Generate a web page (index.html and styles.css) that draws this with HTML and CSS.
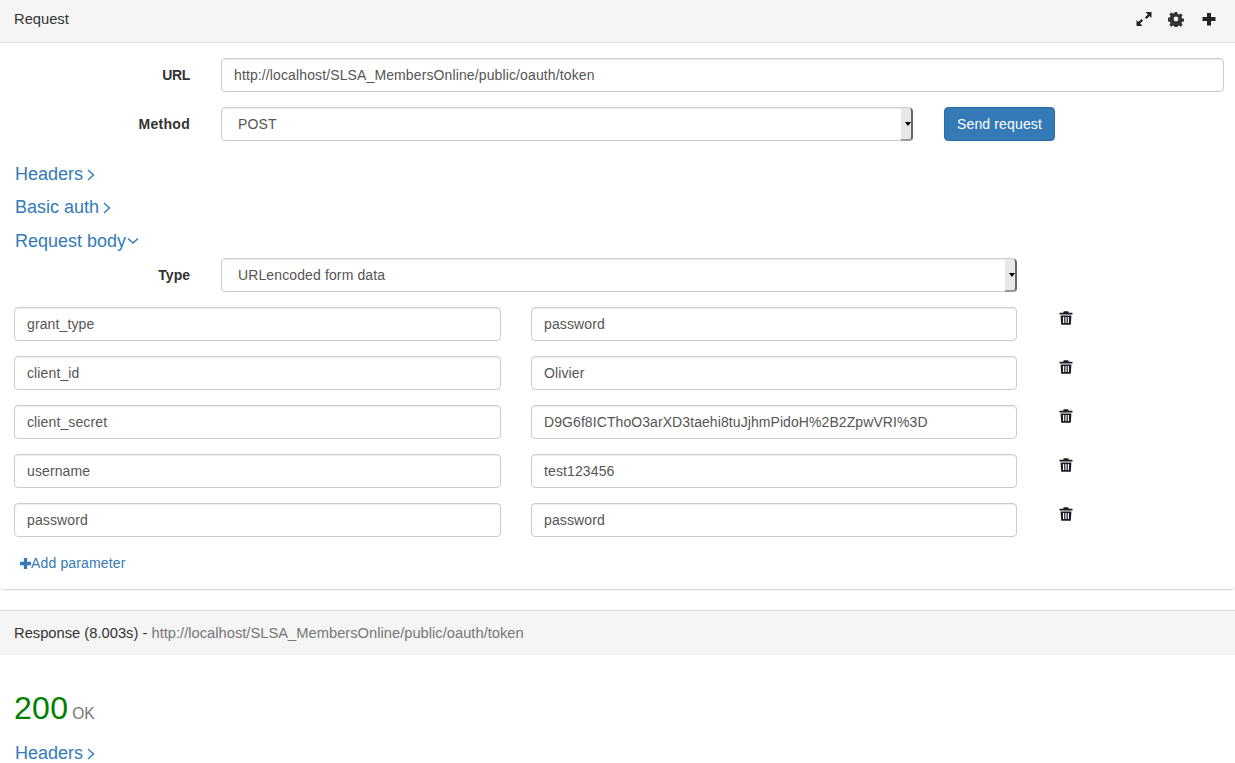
FILE: index.html
```html
<!DOCTYPE html>
<html lang="en">
<head>
<meta charset="utf-8">
<title>Request</title>
<link rel="stylesheet" href="styles.css">
</head>
<body>
<section class="panel">
  <header class="heading request-heading">
    <span>Request</span>
    <div class="tools">
      <svg class="tool expand" viewBox="0 0 16 16" width="16" height="16"><path d="M9.500 1H15.500v6l-1.900-1.900-3 3-1.700-1.700 3-3zM6.500 15H.5V9l1.900 1.900 3-3 1.700 1.700-3 3z" fill="#222"/></svg>
      <svg class="tool" viewBox="0 0 16 16" width="16" height="16"><path fill="#333" fill-rule="evenodd" d="M6.700 1h2.600l.4 2 1.300.6 1.800-1.100 1.800 1.800-1.100 1.800.6 1.300 2 .4v2.600l-2 .4-.6 1.300 1.100 1.800-1.800 1.800-1.800-1.100-1.300.6-.4 2H6.700l-.4-2-1.300-.6-1.800 1.100-1.800-1.800 1.100-1.800-.6-1.300-2-.4V6.700l2-.4.6-1.300-1.100-1.800 1.800-1.800 1.800 1.100 1.300-.6zM8 5.600a2.400 2.400 0 1 0 0 4.800 2.400 2.400 0 0 0 0-4.800z"/></svg>
      <svg class="tool" viewBox="0 0 16 16" width="16" height="16"><path d="M6 2h4v4h4.500v4H10v4.500H6V10H1.500V6H6z" fill="#222"/></svg>
    </div>
  </header>
  <div class="body">
    <div class="form-row url-row">
      <label class="field-label">URL</label>
      <input class="control url" type="text" value="http://localhost/SLSA_MembersOnline/public/oauth/token">
    </div>
    <div class="form-row method-row">
      <label class="field-label">Method</label>
      <div class="select-wrap method"><select class="control"><option>POST</option></select></div>
      <button class="send">Send request</button>
    </div>
    <a class="section-link headers-link">Headers<svg class="chev" viewBox="0 0 10 12" width="10" height="12"><path d="M2 1 7.500 6 2 11" fill="none" stroke="#337ab7" stroke-width="1.400"/></svg></a>
    <a class="section-link auth-link">Basic auth<svg class="chev" viewBox="0 0 10 12" width="10" height="12"><path d="M2 1 7.500 6 2 11" fill="none" stroke="#337ab7" stroke-width="1.400"/></svg></a>
    <a class="section-link body-link">Request body<svg class="chev-down" viewBox="0 0 12 10" width="12" height="10"><path d="M1 2.500 6 7l5-4.500" fill="none" stroke="#337ab7" stroke-width="1.400"/></svg></a>
    <div class="form-row type-row">
      <label class="field-label">Type</label>
      <div class="select-wrap type"><select class="control"><option>URLencoded form data</option></select></div>
    </div>
    <div class="params">
      <div class="param"><input class="control" type="text" value="grant_type"><input class="control" type="text" value="password"><svg class="trash" viewBox="0 0 14 14" width="14" height="14"><use href="#trash"/></svg></div>
      <div class="param"><input class="control" type="text" value="client_id"><input class="control" type="text" value="Olivier"><svg class="trash" viewBox="0 0 14 14" width="14" height="14"><use href="#trash"/></svg></div>
      <div class="param"><input class="control" type="text" value="client_secret"><input class="control long-value" type="text" value="D9G6f8ICThoO3arXD3taehi8tuJjhmPidoH%2B2ZpwVRI%3D"><svg class="trash" viewBox="0 0 14 14" width="14" height="14"><use href="#trash"/></svg></div>
      <div class="param"><input class="control" type="text" value="username"><input class="control" type="text" value="test123456"><svg class="trash" viewBox="0 0 14 14" width="14" height="14"><use href="#trash"/></svg></div>
      <div class="param"><input class="control" type="text" value="password"><input class="control" type="text" value="password"><svg class="trash" viewBox="0 0 14 14" width="14" height="14"><use href="#trash"/></svg></div>
    </div>
    <a class="add-param"><svg viewBox="0 0 12 12" width="11" height="11"><path d="M4.200 0h3.600v4.200H12v3.600H7.800V12H4.200V7.800H0V4.200h4.200z" fill="#337ab7"/></svg>Add parameter</a>
  </div>
</section>
<section class="response">
  <header class="heading response-heading">Response (8.003s) - <span class="muted">http://localhost/SLSA_MembersOnline/public/oauth/token</span></header>
  <div class="status"><span class="code">200</span> <span class="status-text">OK</span></div>
  <a class="section-link">Headers<svg class="chev" viewBox="0 0 10 12" width="10" height="12"><path d="M2 1 7.500 6 2 11" fill="none" stroke="#337ab7" stroke-width="1.400"/></svg></a>
</section>
<svg class="defs" width="0" height="0"><defs><symbol id="trash" viewBox="0 0 14 14"><path fill="#1c1c24" fill-rule="evenodd" d="M4.800.3h4.400l.6 1.500H13.500v1.700H.5V1.800h3.700zM1.600 4.500h10.800l-.6 9.200H2.200zM4 6v6h1.200V6zm2.400 0v6h1.200V6zm2.400 0v6H10V6z"/></symbol></defs></svg>
</body>
</html>
```
FILE: styles.css
```css
* { box-sizing: border-box; }
html, body { margin: 0; padding: 0; }
body {
  height: 763px;
  overflow: hidden;
  background: #fff;
  color: #333;
  font: 14px/20px "Liberation Sans", Arial, sans-serif;
}
.panel {
  height: 590px;
  border-bottom: 1px solid #ddd;
  border-radius: 0 0 4px 4px;
  box-shadow: 0 1px 1px rgba(0,0,0,.05);
}
.heading {
  background: #f5f5f5;
  padding-left: 14px;
  color: #333;
  font-size: 14.730px;
}
.request-heading {
  height: 43px;
  border-bottom: 1px solid #ddd;
  display: flex;
  align-items: center;
  justify-content: space-between;
  padding-right: 18px;
  padding-bottom: 4px;
}
.tools { display: flex; gap: 17px; }
.tool { display: block; }
.expand { margin-right: -1px; }
.body { padding: 15px 11px 0 14px; }
.form-row { display: flex; align-items: flex-start; }
.field-label {
  width: 176px;
  text-align: right;
  font-weight: 700;
  line-height: 34px;
  margin: 0 31px 0 0;
  flex: none;
}
.url-row .field-label { letter-spacing: -.3px; }
.method-row .field-label { letter-spacing: .3px; }
.control {
  display: block;
  height: 34px;
  padding: 6px 12px;
  font: 14px/20px "Liberation Sans", Arial, sans-serif;
  letter-spacing: .12px;
  color: #555;
  background: #fff;
  border: 1px solid #ccc;
  border-radius: 4px;
  box-shadow: inset 0 1px 1px rgba(0,0,0,.075);
}
.control.long-value { letter-spacing: .08px; }
.url { flex: 1; min-width: 0; }
.method-row { margin-top: 15px; }
.select-wrap { position: relative; flex: none; }
.select-wrap select {
  width: 100%;
  padding-left: 16px;
  appearance: none;
  -webkit-appearance: none;
}
.select-wrap::after {
  content: "";
  position: absolute;
  top: 1px;
  right: 0;
  bottom: 0;
  width: 10px;
  background: #e8e8e8;
  border-right: 2px solid #666;
  border-bottom: 2px solid #999;
  border-radius: 0 4px 4px 0;
}
.select-wrap::before {
  content: "";
  position: absolute;
  z-index: 1;
  top: 15px;
  right: 2px;
  border: 3px solid transparent;
  border-top: 4px solid #000;
  border-bottom: 0;
}
.method { width: 692px; }
.type { width: 796px; }
.send {
  margin-left: 31px;
  width: 111px;
  height: 34px;
  padding: 0;
  font: 14px/20px "Liberation Sans", Arial, sans-serif;
  letter-spacing: .15px;
  color: #fff;
  background: #337ab7;
  border: 1px solid #2e6da4;
  border-radius: 4px;
}
.section-link {
  display: block;
  font-size: 18px;
  line-height: 20px;
  color: #337ab7;
  height: 20px;
}
.body > .section-link { margin-left: 1px; }
.headers-link { margin-top: 23px; }
.auth-link { margin-top: 13px; }
.body-link { margin-top: 14px; }
.chev { margin-left: 3px; vertical-align: -1px; }
.chev-down { margin-left: 1px; vertical-align: 1px; }
.type-row { margin-top: 7px; }
.params { margin-top: 15px; display: flex; flex-direction: column; gap: 15px; }
.param { display: flex; align-items: flex-start; }
.param .control { width: 487px; }
.param .control + .control { margin-left: 30px; width: 486px; }
.trash { margin: 4px 0 0 41.500px; flex: none; }
.add-param {
  display: flex;
  align-items: center;
  color: #337ab7;
  letter-spacing: .15px;
  margin: 16px 0 0 6px;
}
.defs { position: absolute; }
.response { margin-top: 20px; }
.response-heading {
  height: 45px;
  border-top: 1px solid #ddd;
  line-height: 44px;
}
.muted { color: #777; }
.status { padding: 33px 0 0 14px; height: 88px; line-height: 40px; color: #777; }
.code { color: #008000; font-size: 32px; letter-spacing: .3px; }
.status-text { font-size: 15.600px; }
.response .section-link { margin-left: 15px; }
```
